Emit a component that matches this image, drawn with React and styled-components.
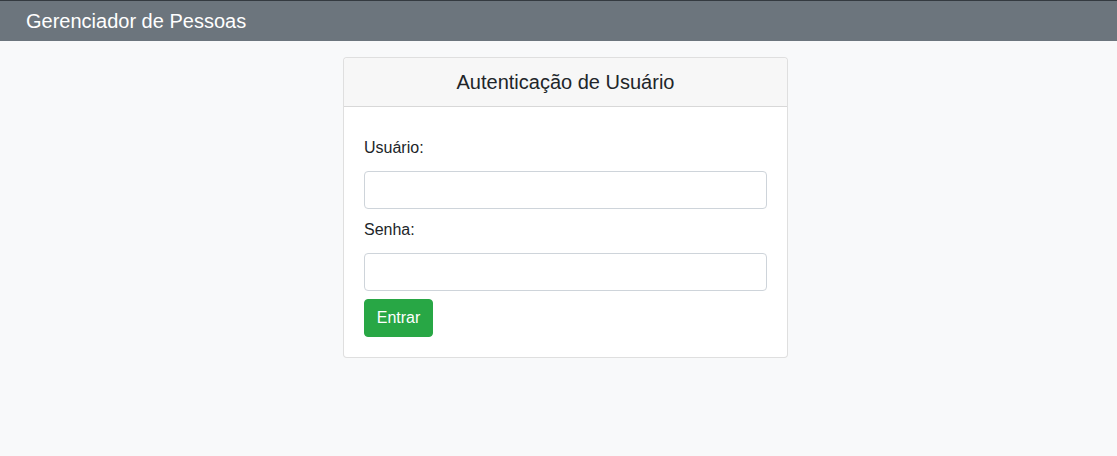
import React from "react";
import styled, { createGlobalStyle } from "styled-components";

const GlobalStyle = createGlobalStyle`
  html, body {
    margin: 0;
    padding: 0;
    background: #f8f9fa;
    font-family: "Liberation Sans", Arial, sans-serif;
    color: #212529;
  }
  * { box-sizing: border-box; }
`;

const Page = styled.div`
  min-height: 456px;
  background: #f8f9fa;
`;

const Navbar = styled.nav`
  height: 41px;
  background: #6c757d;
  border-top: 1px solid #343a40;
  display: flex;
  align-items: center;
  padding: 0 26px;
`;

const Brand = styled.span`
  color: #fff;
  font-size: 20px;
  line-height: 30px;
`;

const Main = styled.main`
  display: flex;
  justify-content: center;
  padding: 16px 0 0 14px;
`;

const Card = styled.div`
  width: 445px;
  background: #fff;
  border: 1px solid rgba(0, 0, 0, 0.125);
  border-radius: 4px;
`;

const CardHeader = styled.div`
  background: #f7f7f7;
  border-bottom: 1px solid rgba(0, 0, 0, 0.125);
  border-radius: 4px 4px 0 0;
  height: 49px;
  display: flex;
  align-items: center;
  justify-content: center;
  font-size: 20px;
`;

const CardBody = styled.form`
  padding: 20px;
  display: flex;
  flex-direction: column;
`;

const Label = styled.label`
  font-size: 16px;
  line-height: 24px;
  padding: 9px 0 5px;
  margin-bottom: 6px;
`;

const Input = styled.input`
  height: 38px;
  width: 100%;
  border: 1px solid #ced4da;
  border-radius: 4px;
  padding: 6px 12px;
  font-size: 16px;
  font-family: inherit;
  background: #fff;
  margin-bottom: ${(p) => p.$gap || 0}px;
`;

const Button = styled.button`
  align-self: flex-start;
  height: 38px;
  width: 69px;
  padding: 0;
  background: #28a745;
  border: 1px solid #28a745;
  border-radius: 4px;
  color: #fff;
  font-size: 16px;
  font-family: inherit;
`;

export default function App() {
  return (
    <Page>
      <GlobalStyle />
      <Navbar>
        <Brand>Gerenciador de Pessoas</Brand>
      </Navbar>
      <Main>
        <Card>
          <CardHeader>Autenticação de Usuário</CardHeader>
          <CardBody onSubmit={(e) => e.preventDefault()}>
            <Label>Usuário:</Label>
            <Input type="text" />
            <Label>Senha:</Label>
            <Input type="password" $gap={8} />
            <Button type="submit">Entrar</Button>
          </CardBody>
        </Card>
      </Main>
    </Page>
  );
}
